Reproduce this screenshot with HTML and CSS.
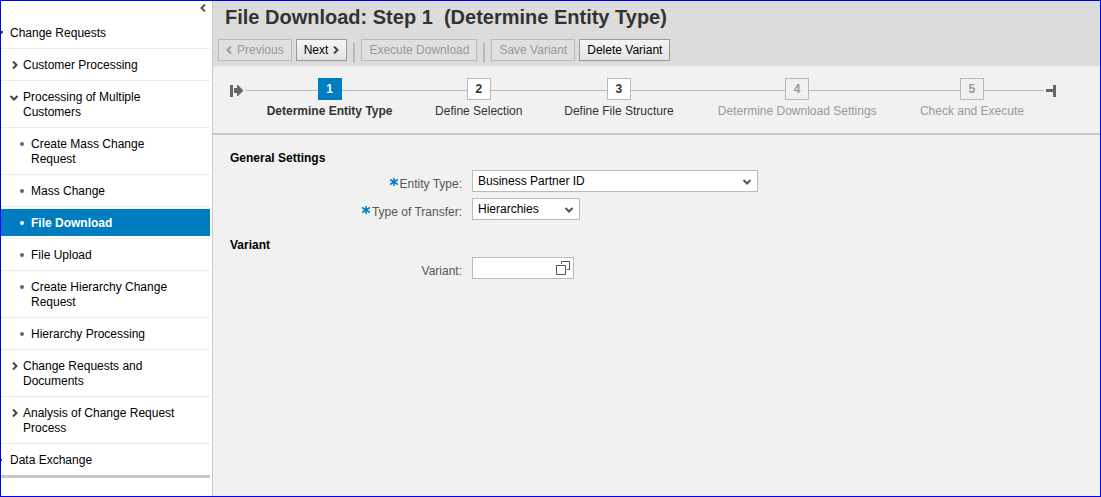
FILE: index.html
```html
<!DOCTYPE html>
<html lang="en">
<head>
<meta charset="utf-8">
<title>File Download</title>
<link rel="stylesheet" href="styles.css">
</head>
<body>
<div class="app">
  <nav class="sidebar" aria-label="Navigation">
    <div class="sidebar-top">
      <button class="collapse" type="button" aria-label="Collapse"><svg width="6" height="8" viewBox="0 0 6 8"><path d="M5 0.5 1.5 4 5 7.5"/></svg></button>
    </div>
    <ul class="nav-list">
      <li class="nav-item root"><svg class="cut" width="3" height="4" viewBox="0 0 3 4"><path d="M0 0h2v2H1v1H0z"/></svg><a href="#">Change Requests</a></li>
      <li class="nav-item group"><svg width="6" height="8" viewBox="0 0 6 8"><path d="M1 0.5 4.5 4 1 7.5"/></svg><a href="#">Customer Processing</a></li>
      <li class="nav-item group open"><svg width="8" height="6" viewBox="0 0 8 6"><path d="M0.5 1 4 4.5 7.5 1"/></svg><a href="#">Processing of Multiple<br>Customers</a></li>
      <li class="nav-item leaf"><i class="dot"></i><a href="#">Create Mass Change<br>Request</a></li>
      <li class="nav-item leaf"><i class="dot"></i><a href="#">Mass Change</a></li>
      <li class="nav-item leaf selected"><i class="dot"></i><a href="#" aria-current="page">File Download</a></li>
      <li class="nav-item leaf"><i class="dot"></i><a href="#">File Upload</a></li>
      <li class="nav-item leaf"><i class="dot"></i><a href="#">Create Hierarchy Change<br>Request</a></li>
      <li class="nav-item leaf"><i class="dot"></i><a href="#">Hierarchy Processing</a></li>
      <li class="nav-item group"><svg width="6" height="8" viewBox="0 0 6 8"><path d="M1 0.5 4.5 4 1 7.5"/></svg><a href="#">Change Requests and<br>Documents</a></li>
      <li class="nav-item group"><svg width="6" height="8" viewBox="0 0 6 8"><path d="M1 0.5 4.5 4 1 7.5"/></svg><a href="#">Analysis of Change Request<br>Process</a></li>
      <li class="nav-item root"><svg class="cut" width="3" height="4" viewBox="0 0 3 4"><path d="M0 1h1v2H0z"/></svg><a href="#">Data Exchange</a></li>
    </ul>
  </nav>
  <main class="main">
    <header class="header">
      <h1 class="title">File Download: Step 1&nbsp; (Determine Entity Type)</h1>
      <div class="toolbar">
        <button class="btn" type="button" disabled><svg width="6" height="8" viewBox="0 0 6 8"><path d="M5 0.5 1.5 4 5 7.5"/></svg>Previous</button>
        <button class="btn" type="button">Next<svg width="6" height="8" viewBox="0 0 6 8"><path d="M1 0.5 4.5 4 1 7.5"/></svg></button>
        <span class="divider"></span>
        <button class="btn" type="button" disabled>Execute Download</button>
        <span class="divider"></span>
        <button class="btn" type="button" disabled>Save Variant</button>
        <button class="btn" type="button">Delete Variant</button>
      </div>
    </header>
    <div class="roadmap">
      <svg class="cap" width="13" height="12" viewBox="0 0 13 12"><path d="M0 0h3v12H0zM4 3h3V0h1l5 5v1l-5 5H7V8H4z"/></svg>
      <ol class="steps">
        <li class="step current"><span class="num">1</span><span class="step-label">Determine Entity Type</span></li>
        <li class="step"><span class="num">2</span><span class="step-label">Define Selection</span></li>
        <li class="step"><span class="num">3</span><span class="step-label">Define File Structure</span></li>
        <li class="step inactive"><span class="num">4</span><span class="step-label">Determine Download Settings</span></li>
        <li class="step inactive"><span class="num">5</span><span class="step-label">Check and Execute</span></li>
      </ol>
      <svg class="cap" width="10" height="12" viewBox="0 0 10 12"><path d="M7 0h3v12H7V7H0V4h7z"/></svg>
    </div>
    <form class="form">
      <h2 class="section">General Settings</h2>
      <div class="row">
        <label class="label" for="entity"><svg class="star" width="8" height="8" viewBox="0 0 8 8"><path d="M4 0v8M0 1.5l8 5M0 6.5l8-5"/></svg>Entity Type:</label>
        <span class="field wide"><select id="entity"><option>Business Partner ID</option></select><svg class="arrow" width="8" height="6" viewBox="0 0 8 6"><path d="M0.5 1 4 4.5 7.5 1"/></svg></span>
      </div>
      <div class="row">
        <label class="label" for="transfer"><svg class="star" width="8" height="8" viewBox="0 0 8 8"><path d="M4 0v8M0 1.5l8 5M0 6.5l8-5"/></svg>Type of Transfer:</label>
        <span class="field medium"><select id="transfer"><option>Hierarchies</option></select><svg class="arrow" width="8" height="6" viewBox="0 0 8 6"><path d="M0.5 1 4 4.5 7.5 1"/></svg></span>
      </div>
      <h2 class="section">Variant</h2>
      <div class="row">
        <label class="label" for="variant">Variant:</label>
        <span class="field narrow"><input id="variant" type="text"><button class="help" type="button" aria-label="Value help"><svg width="14" height="14" viewBox="0 0 14 14"><path d="M5.5 3V0.5h8v8H11M0.5 4.5h9v9h-9z"/></svg></button></span>
      </div>
    </form>
  </main>
</div>
</body>
</html>
```

FILE: styles.css
```css
* { box-sizing: border-box; }

body {
  margin: 0;
  font: 12px/15px "Liberation Sans", Arial, sans-serif;
  color: #000;
}

svg {
  display: block;
  flex: none;
  fill: none;
  stroke: currentColor;
  stroke-width: 2;
}

button, input, select { font: inherit; }

.app {
  display: flex;
  min-height: 100vh;
  border: 1px solid #00f;
  background: #fff;
}

/* Sidebar */
.sidebar {
  flex: none;
  width: 212px;
  padding-right: 2px;
  border-right: 1px solid #c8c8c8;
}

.sidebar-top {
  display: flex;
  justify-content: flex-end;
  height: 16px;
  padding: 3px 4px 0 0;
}

.collapse {
  height: 8px;
  padding: 0;
  border: 0;
  background: none;
  color: #555;
}

.nav-list {
  margin: 0;
  padding: 0;
  list-style: none;
  border-bottom: 3px solid #c8c8c8;
}

.nav-item {
  display: flex;
  align-items: flex-start;
  padding: 9px 0 7px;
  color: #444;
}

.nav-item + .nav-item { border-top: 1px solid #ebebeb; }

.nav-item a {
  color: #000;
  text-decoration: none;
}

.root { gap: 6px; }
.cut { margin-top: 5px; fill: currentColor; stroke: none; }
.group { padding-left: 11px; gap: 5px; }
.group svg { margin-top: 3px; }
.open { padding-left: 9px; gap: 5px; }
.open svg { margin-top: 5px; }
.leaf { padding-left: 19px; gap: 7px; }

.dot {
  flex: none;
  width: 4px;
  height: 4px;
  margin-top: 5px;
  border-radius: 2px;
  background: #666;
}

.selected {
  background: linear-gradient(#007cc0, #007cc0) 0 2px / 100% 27px no-repeat;
  font-weight: bold;
}

.selected a { color: #fff; }
.selected .dot { background: #fff; }

/* Header */
.main {
  flex: 1;
  min-width: 0;
  background: #f1f1f1;
}

.header {
  padding: 4px 5px 3px;
  background: #dcdcdc;
}

.title {
  margin: 0 0 10px;
  padding-left: 7px;
  font-size: 20px;
  line-height: 24px;
  color: #333;
}

.toolbar {
  display: flex;
  align-items: flex-start;
  gap: 4px;
}

.btn {
  display: flex;
  align-items: center;
  gap: 5px;
  height: 22px;
  padding: 0 7px;
  border: 1px solid #999;
  background: linear-gradient(#f5f5f5, #e4e4e4);
  color: #000;
  white-space: nowrap;
}

.btn svg { color: #444; }

.btn:disabled {
  border-color: #bababa;
  background: #e0e0e0;
  color: #999;
}

.btn:disabled svg { color: #999; }

.divider {
  width: 2px;
  height: 20px;
  margin: 4px 2px 0;
  background: #bababa;
}

/* Roadmap */
.roadmap {
  display: flex;
  align-items: flex-start;
  padding: 12px 44px 14px 17px;
  border-bottom: 2px solid #c8c8c8;
}

.cap {
  margin-top: 7px;
  fill: #666;
  stroke: none;
}

.steps {
  flex: 1;
  display: grid;
  grid-template-columns: 169fr 129fr 151fr 205fr 144fr;
  margin: 0 2px;
  padding: 0;
  list-style: none;
  background: linear-gradient(#bababa, #bababa) 0 12px / 100% 1px no-repeat;
}

.step {
  display: flex;
  flex-direction: column;
  align-items: center;
  gap: 4px;
  color: #333;
  white-space: nowrap;
}

.num {
  width: 24px;
  height: 22px;
  border: 1px solid #bababa;
  background: #fff;
  font-weight: bold;
  line-height: 20px;
  text-align: center;
}

.current { font-weight: bold; }
.current .num { border-color: #007cc0; background: #007cc0; color: #fff; }
.inactive { color: #999; }
.inactive .num { background: #f1f1f1; }

/* Form */
.form { padding: 16px 17px; }

.section {
  margin: 0 0 4px;
  font-size: 12px;
  line-height: 15px;
}

.row + .section { margin-top: 18px; }

.row {
  display: flex;
  gap: 10px;
}

.row + .row { margin-top: 6px; }

.label {
  display: flex;
  justify-content: flex-end;
  gap: 2px;
  width: 232px;
  padding-top: 7px;
  color: #555;
}

.star {
  margin-top: 1px;
  color: #007cc0;
  stroke-width: 1.5;
}

.field { position: relative; }
.wide { width: 286px; }
.medium { width: 108px; }
.narrow { width: 102px; }

.field select, .field input {
  display: block;
  width: 100%;
  height: 22px;
  padding: 0 5px;
  border: 1px solid #bababa;
  border-radius: 0;
  background: #fff;
  color: #000;
  appearance: none;
}

.arrow {
  position: absolute;
  top: 9px;
  right: 7px;
  color: #555;
  pointer-events: none;
}

.help {
  position: absolute;
  top: 4px;
  right: 4px;
  padding: 0;
  border: 0;
  background: none;
  color: #555;
}

.help svg { stroke-width: 1; }
```
